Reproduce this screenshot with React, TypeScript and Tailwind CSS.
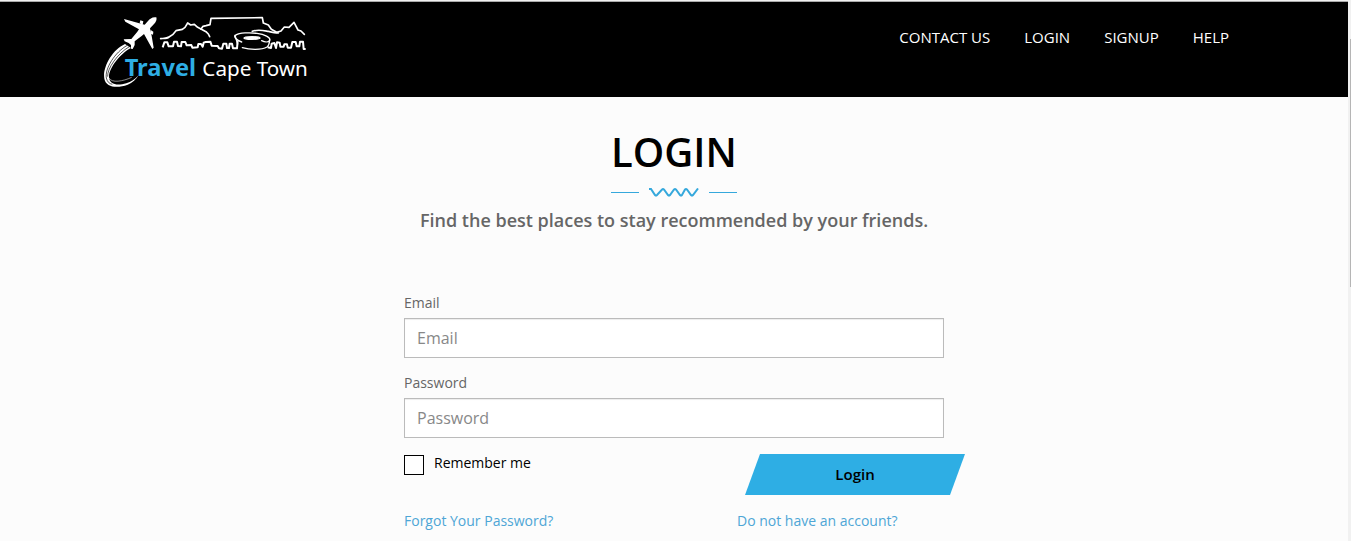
import { useState } from 'react';
import type { FormEvent } from 'react';

type NavItem = {
  label: string;
  href: string;
};

const navItems: NavItem[] = [
  { label: 'CONTACT US', href: '#contact' },
  { label: 'LOGIN', href: '#login' },
  { label: 'SIGNUP', href: '#signup' },
  { label: 'HELP', href: '#help' },
];

function Logo() {
  return (
    <svg viewBox="27 42 621 222" className="h-[74px] w-[207px]" role="img" aria-label="Travel Cape Town">
      {/* contrails */}
      <path
        d="M90 132C50 150 22 204 28 236C33 262 66 266 98 254C112 248 124 238 131 225C120 238 108 246 94 250C64 259 44 252 42 232C40 206 76 160 108 144Z"
        fill="#fff"
      />
      <path d="M97 136C60 156 29 206 34 234C37 246 43 251 52 253" fill="none" stroke="#000" strokeWidth="2" />
      <path d="M103 140C68 160 36 206 38 230" fill="none" stroke="#000" strokeWidth="2" />
      <path d="M42 234C50 250 84 244 110 232" fill="none" stroke="#fff" strokeWidth="2" opacity="0.8" />
      {/* plane */}
      <g fill="#fff">
        <path d="M184 52C172 50 165 56 159 63L149 74L122 67L87 57L91 65L132 88L127 95L109 117L86 118L89 124L101 129L108 135L108 146L113 147L119 135L119 124L140 108L147 102L172 147L176 143L170 108L165 85L175 74C184 66 186 59 184 52Z" />
        <path d="M136 61L145 64L143 74L134 70Z" />
        <path d="M167 90L175 95L174 104L166 101Z" />
      </g>
      {/* Table Mountain */}
      <g fill="none" stroke="#fff" strokeWidth="5" strokeLinecap="round" strokeLinejoin="round">
        <path d="M197 116C205 115 216 116 222 111L233 104L243 92L262 88L270 82L278 69L287 75L298 73L308 82L322 89L333 95L340 102L344 110" />
        <path d="M318 87L324 79L333 77L345 74L348 55L502 53L505 69L520 75L529 88L545 97L558 93L568 81L582 82L597 67L609 90L618 93L628 103" />
        <path d="M472 94C488 87 508 92 520 94C532 97 540 99 550 99" />
      </g>
      {/* skyline */}
      <g fill="none" stroke="#fff" strokeWidth="6" strokeLinejoin="round">
        <path d="M203 142L208 127L217 127L221 139L234 139L237 125L246 125L249 138L258 139L260 126L271 126L275 136L289 135L292 143L308 142L310 132L318 132L323 140L326 128L332 126L346 125L350 137L368 138L372 145L381 146L385 131L394 131L396 144L402 144L404 131L411 131L414 145L426 145L428 122" />
        <path d="M518 142L528 144L530 131L538 129L543 144L546 127L554 128L556 140L566 140L568 133L576 133L578 143L588 143L592 126L602 126L605 139L613 139L615 125L624 125L626 147L632 147" />
      </g>
      {/* stadium */}
      <g fill="none" stroke="#fff" strokeWidth="4" strokeLinecap="round">
        <path d="M440 126C424 121 415 110 421 106C434 98 464 97 486 100C508 103 528 112 524 121C520 128 508 126 500 122" />
        <path d="M420 106L428 132" />
        <path d="M524 120C523 132 520 138 516 141C500 151 462 149 442 143" />
        <ellipse cx="471" cy="114" rx="24" ry="4" fill="#fff" />
      </g>
      <text x="89" y="228" fill="#2eaee4" fontSize="71" fontWeight="700" fontFamily="'Noto Sans', sans-serif">
        Travel
      </text>
      <text x="322" y="228" fill="#fff" fontSize="62" fontFamily="'Noto Sans', sans-serif">
        Cape Town
      </text>
    </svg>
  );
}

function HeadingRule() {
  return (
    <div className="flex items-center justify-center gap-2.5">
      <span className="h-px w-7 bg-[#35a8dc]" />
      <svg viewBox="0 0 50 9" className="h-[9px] w-[50px]" aria-hidden="true">
        <path
          d="M0 1H2L6 7Q7 8 8 7L13 1.5L14 1L15 1.5L19 7Q20 8 21 7L25 1.5L26 1L27 1.5L31 7Q32 8 33 7L36 1.5L37 1L38 1.5L42 7Q43 8 44 7L49 .5"
          fill="none"
          stroke="#35a8dc"
          strokeWidth="2"
        />
      </svg>
      <span className="h-px w-7 bg-[#35a8dc]" />
    </div>
  );
}

type FieldProps = {
  id: string;
  label: string;
  type: string;
  value: string;
  onChange: (value: string) => void;
};

function Field({ id, label, type, value, onChange }: FieldProps) {
  return (
    <div className="mb-4">
      <label htmlFor={id} className="mb-1.5 block text-sm leading-[18px] text-[#666]">
        {label}
      </label>
      <input
        id={id}
        type={type}
        value={value}
        placeholder={label}
        onChange={(e) => onChange(e.target.value)}
        className="block h-10 w-full border border-[#bbb] bg-white px-3 text-base text-[#555] shadow-[inset_0_1px_1px_rgba(0,0,0,0.075)] placeholder:text-[#888] focus:border-[#2eaee4] focus:outline-none"
      />
    </div>
  );
}

export default function App() {
  const [email, setEmail] = useState('');
  const [password, setPassword] = useState('');
  const [remember, setRemember] = useState(false);

  const handleSubmit = (e: FormEvent) => {
    e.preventDefault();
  };

  return (
    <div className="flex h-screen overflow-hidden border-t border-[#f1f1f1] bg-[#fcfcfc] font-['Open_Sans',sans-serif]">
      <div className="min-w-0 flex-1 border-t border-[#aaa]">
        <header className="bg-black">
          <div className="mx-auto flex h-[95px] max-w-[1170px] items-start justify-between px-[15px] pt-3">
            <a href="#home">
              <Logo />
            </a>
            <nav className="flex gap-[34px] px-[15px] pt-[11px]">
              {navItems.map((item) => (
                <a key={item.label} href={item.href} className="text-[15px] leading-6 text-white hover:text-[#2eaee4]">
                  {item.label}
                </a>
              ))}
            </nav>
          </div>
        </header>

        <main className="mx-auto max-w-[540px] pt-[27px]">
          <div className="text-center">
            <h1 className="text-[40px] font-semibold leading-[56px] text-black">LOGIN</h1>
            <div className="pt-2">
              <HeadingRule />
            </div>
            <p className="pt-[11px] text-lg font-semibold leading-6 text-[#666]">
              Find the best places to stay recommended by your friends.
            </p>
          </div>

          <form onSubmit={handleSubmit} className="pt-[62px]">
            <Field id="email" label="Email" type="email" value={email} onChange={setEmail} />
            <Field id="password" label="Password" type="password" value={password} onChange={setPassword} />

            <div className="grid grid-cols-[333px_1fr]">
              <label className="flex items-start gap-2.5 text-sm leading-[18px] text-black">
                <input
                  type="checkbox"
                  checked={remember}
                  onChange={(e) => setRemember(e.target.checked)}
                  className="mt-px size-5 appearance-none border border-black bg-white checked:bg-[#2eaee4]"
                />
                Remember me
              </label>
              <button
                type="submit"
                className="ml-2 h-[41px] w-[220px] bg-[#2eaee4] text-[15px] font-semibold text-black [clip-path:polygon(15px_0,100%_0,calc(100%-15px)_100%,0_100%)] hover:bg-[#2499ca]"
              >
                Login
              </button>
              <a href="#forgot" className="pt-4 text-sm leading-5 text-[#4ea6d6] hover:underline">
                Forgot Your Password?
              </a>
              <a href="#signup" className="pt-4 text-sm leading-5 text-[#4ea6d6] hover:underline">
                Do not have an account?
              </a>
            </div>
          </form>
        </main>
      </div>

      {/* scroll track */}
      <div className="flex w-[3px] justify-end bg-[#f1f1f1] pt-[38px]" aria-hidden="true">
        <div className="h-[248px] w-px bg-[#b5b5b5]" />
      </div>
    </div>
  );
}
